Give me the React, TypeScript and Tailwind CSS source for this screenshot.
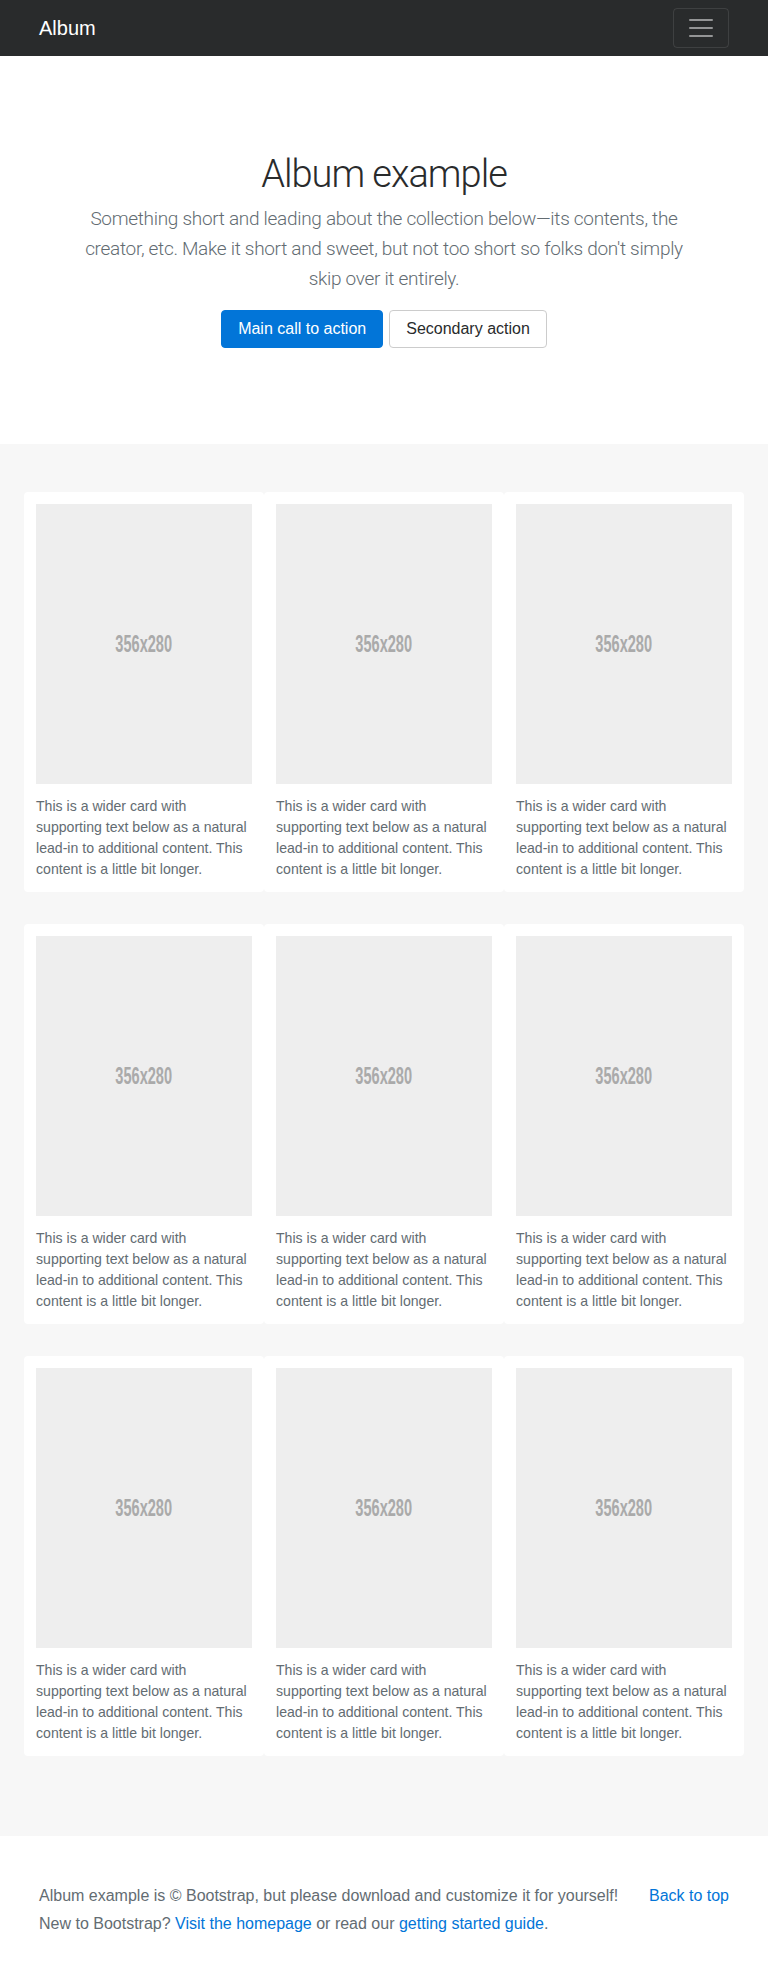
const cards = Array.from({ length: 9 }, (_, i) => i);

function Card() {
  return (
    <div className="bg-white rounded p-3">
      <div className="h-[280px] bg-[#eee] flex items-center justify-center overflow-hidden">
        <span className="text-[24px] font-bold text-[#aaa] scale-x-[0.607]">356x280</span>
      </div>
      <p className="mt-3 text-[14.1px] leading-[21px] text-[#636c72]">
        This is a wider card with supporting text below as a natural lead-in to additional content. This content is a little bit longer.
      </p>
    </div>
  );
}

export default function App() {
  return (
    <div className="min-h-screen bg-white text-[#292b2c] font-['Liberation_Sans',Arial,sans-serif]">
      <nav className="bg-[#292b2c] py-2">
        <div className="w-[720px] mx-auto px-[15px] flex items-center justify-between">
          <a href="#" className="text-white text-xl leading-10">Album</a>
          <button className="w-14 h-10 border border-white/10 rounded flex items-center justify-center">
            <svg width="30" height="30" viewBox="0 0 30 30">
              <path d="M4 7h22M4 15h22M4 23h22" stroke="rgba(255,255,255,0.5)" strokeWidth="2" strokeLinecap="round" />
            </svg>
          </button>
        </div>
      </nav>

      <section className="py-24 text-center">
        <div className="max-w-[640px] mx-auto px-[15px]">
          <h1 className="text-[38px] font-light leading-[44px] tracking-[-1px] mb-2 font-['Roboto',sans-serif]">Album example</h1>
          <p className="text-[19px] font-light leading-[30px] tracking-[-0.3px] text-[#636c72] mb-4 font-['Roboto',sans-serif]">
            Something short and leading about the collection below—its contents, the creator, etc. Make it short and sweet, but not too short so folks don't simply skip over it entirely.
          </p>
          <div className="flex justify-center gap-1.5">
            <a href="#" className="px-4 py-2 leading-5 border border-[#0275d8] bg-[#0275d8] text-white rounded">Main call to action</a>
            <a href="#" className="px-4 py-2 leading-5 border border-[#ccc] bg-white text-[#292b2c] rounded">Secondary action</a>
          </div>
        </div>
      </section>

      <div className="bg-[#f7f7f7] pt-12 pb-20">
        <div className="w-[720px] mx-auto grid grid-cols-3 gap-y-8">
          {cards.map((i) => (
            <Card key={i} />
          ))}
        </div>
      </div>

      <footer className="py-12 text-[#636c72] leading-6">
        <div className="w-[720px] mx-auto px-[15px]">
          <div className="flex justify-between mb-1">
            <p>Album example is © Bootstrap, but please download and customize it for yourself!</p>
            <a href="#" className="text-[#0275d8]">Back to top</a>
          </div>
          <p className="mb-1">
            New to Bootstrap? <a href="#" className="text-[#0275d8]">Visit the homepage</a> or read our{" "}
            <a href="#" className="text-[#0275d8]">getting started guide</a>.
          </p>
        </div>
      </footer>
    </div>
  );
}
